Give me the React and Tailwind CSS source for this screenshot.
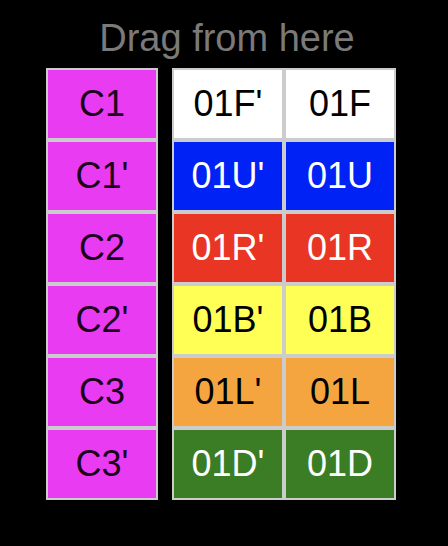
const left = ["C1", "C1'", "C2", "C2'", "C3", "C3'"];

const faces = [
  { key: "F", bg: "bg-white", text: "text-black" },
  { key: "U", bg: "bg-[#0022f5]", text: "text-white" },
  { key: "R", bg: "bg-[#e93524]", text: "text-white" },
  { key: "B", bg: "bg-[#ffff55]", text: "text-black" },
  { key: "L", bg: "bg-[#f4a53f]", text: "text-black" },
  { key: "D", bg: "bg-[#3a7d24]", text: "text-white" },
];

function Cell({ label, className }) {
  return (
    <div
      className={`w-[112px] h-[72px] border-2 border-[#cccccc] flex items-center justify-center text-[36px] ${className}`}
    >
      {label}
    </div>
  );
}

export default function App() {
  return (
    <div
      className="w-[448px] h-[546px] bg-black overflow-hidden"
      style={{ fontFamily: '"Liberation Sans", Arial, sans-serif' }}
    >
      {/* Title */}
      <div className="pt-[16px] pl-[6px] text-center text-[38px] leading-[44px] text-[#7a7a7a]">
        Drag from here
      </div>

      {/* Grid */}
      <div className="mt-[8px] pl-[46px] flex gap-[14px]">
        <div className="flex flex-col">
          {left.map((c) => (
            <Cell key={c} label={c} className="bg-[#e93cf2] text-[#1a001a]" />
          ))}
        </div>
        <div className="flex flex-col">
          {faces.map((f) => (
            <div key={f.key} className="flex">
              <Cell label={`01${f.key}'`} className={`${f.bg} ${f.text}`} />
              <Cell label={`01${f.key}`} className={`${f.bg} ${f.text}`} />
            </div>
          ))}
        </div>
      </div>
    </div>
  );
}
